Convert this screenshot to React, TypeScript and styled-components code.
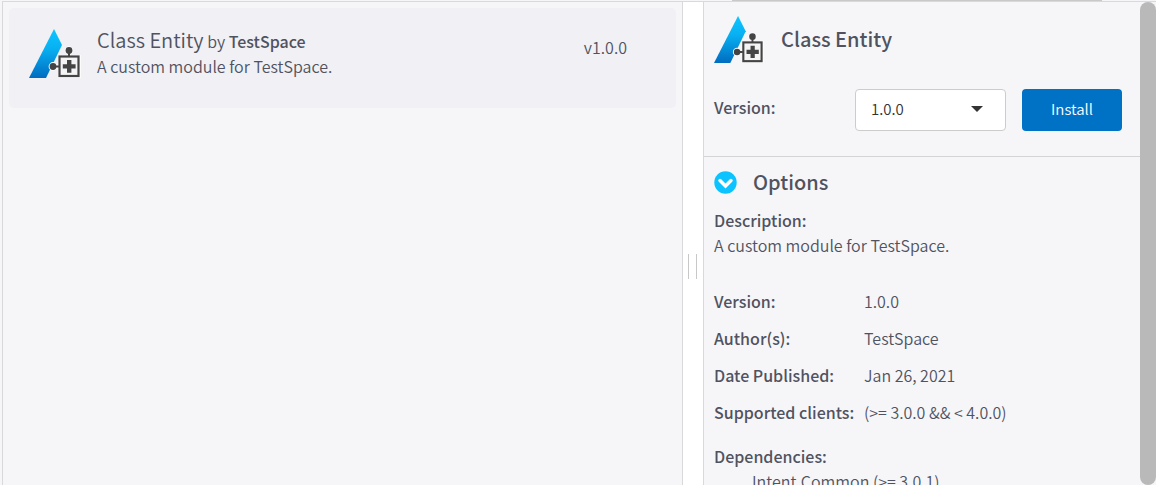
import React, { useState } from 'react';
import styled, { createGlobalStyle } from 'styled-components';

const GlobalStyle = createGlobalStyle`
  *, *::before, *::after { box-sizing: border-box; }
  body {
    margin: 0;
    background: #f6f6f9;
    color: #50535f;
    font-family: "Source Sans Pro", "Noto Sans CJK SC", sans-serif;
    font-size: 16px;
    font-weight: 350;
    line-height: 25px;
  }
  h1, h2, p, dl, dd, ul { margin: 0; padding: 0; font-weight: 350; }
`;

const Page = styled.div`
  display: flex;
  flex-direction: column;
  height: 100vh;
  padding-left: 2px;
  overflow: hidden;
`;

const TopEdge = styled.div`
  flex: none;
  height: 1px;
  margin: 0 54px 0 730px;
  background: #c9c9c9;
`;

const Split = styled.main`
  flex: 1;
  min-height: 0;
  display: grid;
  grid-template-columns: minmax(0, 681fr) 20px minmax(0, 453fr);
  border-top: 1px solid #d9d9dc;
`;

const ListPane = styled.section`
  padding: 6px;
  border: solid #d9d9dc;
  border-width: 0 1px;
`;

const Splitter = styled.div`
  display: flex;
  align-items: center;
  padding: 46px 0 0 5px;
  background: #fff;
`;

const Grip = styled.span`
  width: 9px;
  height: 25px;
  border: solid #c8c8c8;
  border-width: 0 1px;
`;

const Card = styled.article`
  display: flex;
  height: 100px;
  padding: 19px 49px 0 20px;
  border-radius: 5px;
  background: #f0f0f5;
`;

const CardLogo = styled.div`
  padding-top: 1px;
`;

const CardBody = styled.div`
  flex: 1;
  margin-left: 16px;
`;

const CardTitle = styled.h2`
  font-size: 16px;
  line-height: 25px;
`;

const Name = styled.span`
  font-size: 20px;
`;

const Strong = styled.strong`
  font-weight: 500;
`;

const CardVersion = styled.span`
  padding-top: 8px;
`;

const DetailPane = styled.aside`
  display: flex;
  min-height: 0;
  border-left: 1px solid #d9d9dc;
`;

const DetailContent = styled.div`
  flex: 1;
  min-width: 0;
  overflow: hidden;
`;

const ScrollThumb = styled.div`
  flex: none;
  width: 16px;
  border-radius: 8px;
  background: #b9b9b9;
`;

const DetailHeader = styled.header`
  padding: 13px 18px 25px 10px;
  border-bottom: 1px solid #d4d4d8;
`;

const TitleRow = styled.div`
  display: flex;
`;

const Title = styled.h1`
  margin-left: 17px;
  padding-top: 11px;
  font-size: 20px;
  font-weight: 500;
  line-height: 25px;
`;

const InstallRow = styled.div`
  display: flex;
  align-items: center;
  gap: 16px;
  margin-top: 24px;
`;

const VersionLabel = styled.label`
  flex: 1;
  padding-bottom: 5px;
  font-weight: 500;
`;

const SelectWrap = styled.div`
  position: relative;
  width: 151px;
`;

const Select = styled.select`
  appearance: none;
  display: block;
  width: 100%;
  height: 42px;
  padding: 0 15px 4px;
  border: 1px solid #ccc;
  border-radius: 4px;
  background: #fff;
  color: #333;
  font: inherit;
  font-size: 15px;
`;

const Caret = styled.svg`
  position: absolute;
  top: 17px;
  right: 23px;
  pointer-events: none;
`;

const InstallButton = styled.button`
  width: 100px;
  height: 42px;
  padding: 0 0 4px;
  border: 0;
  border-radius: 4px;
  background: #0072c6;
  color: #fff;
  font: inherit;
  font-size: 15px;
`;

const Options = styled.section`
  padding: 12px 10px;
`;

const OptionsToggle = styled.button`
  display: flex;
  align-items: center;
  gap: 16px;
  padding: 0;
  border: 0;
  background: none;
  color: inherit;
  font: inherit;
  font-size: 20px;
  font-weight: 500;
  line-height: 26px;
`;

const Label = styled.dt`
  font-weight: 500;
`;

const Description = styled.dl`
  margin-top: 13px;
`;

const Facts = styled.dl`
  display: grid;
  grid-template-columns: 150px 1fr;
  row-gap: 12px;
  margin-top: 31px;
`;

const Dependencies = styled.dl`
  margin-top: 19px;
`;

const DependencyList = styled.ul`
  padding-left: 38px;
  list-style: none;
`;

function ModuleLogo({ id, size }: { id: string; size: number }) {
  return (
    <svg width={size} height={size} viewBox="0 0 52 52" aria-hidden="true">
      <defs>
        <linearGradient id={id} x1="0" y1="0" x2="0" y2="1">
          <stop offset="0" stopColor="#0cc6ff" />
          <stop offset="0.4" stopColor="#08b0f2" />
          <stop offset="1" stopColor="#006cc0" />
        </linearGradient>
      </defs>
      <path d="M25 1 33 17 17 50H0Z" fill={`url(#${id})`} />
      <g fill="#fbfbfc" stroke="#fbfbfc" strokeWidth="2">
        <rect x="30" y="28" width="21" height="21" />
        <circle cx="40" cy="22.5" r="3.4" />
        <circle cx="24" cy="38.5" r="3.4" />
        <path d="M40 23v7M24 38.5h7" strokeWidth="4" />
      </g>
      <g fill="#444">
        <circle cx="40" cy="22.5" r="3.4" />
        <circle cx="24" cy="38.5" r="3.4" />
        <path d="M39 24h2v5h-2zM25 37.5h5v2h-5z" />
      </g>
      <rect x="30.5" y="28.5" width="19" height="19.5" fill="#f4f4f6" stroke="#444" strokeWidth="2.2" />
      <path d="M38 32h4.4v4.2h4.2v4.4h-4.2v4.2H38v-4.2h-4.2v-4.4H38z" fill="#444" />
    </svg>
  );
}

function ChevronBadge() {
  return (
    <svg width="23" height="23" viewBox="0 0 23 23" aria-hidden="true">
      <circle cx="11.5" cy="11.5" r="11.2" fill="#0dc3ff" />
      <path d="M6 9.5 11.5 15 17 9.5" fill="none" stroke="#fff" strokeWidth="3.4" strokeLinecap="round" />
    </svg>
  );
}

const facts = [
  ['Version:', '1.0.0'],
  ['Author(s):', 'TestSpace'],
  ['Date Published:', 'Jan 26, 2021'],
  ['Supported clients:', '(>= 3.0.0 && < 4.0.0)'],
];

export default function App() {
  const [open, setOpen] = useState(true);
  return (
    <Page>
      <GlobalStyle />
      <TopEdge />
      <Split>
        <ListPane>
          <Card>
            <CardLogo>
              <ModuleLogo id="logo-list" size={52} />
            </CardLogo>
            <CardBody>
              <CardTitle>
                <Name>Class Entity</Name> by <Strong>TestSpace</Strong>
              </CardTitle>
              <p>A custom module for TestSpace.</p>
            </CardBody>
            <CardVersion>v1.0.0</CardVersion>
          </Card>
        </ListPane>
        <Splitter>
          <Grip />
        </Splitter>
        <DetailPane>
          <DetailContent>
            <DetailHeader>
              <TitleRow>
                <ModuleLogo id="logo-detail" size={50} />
                <Title>Class Entity</Title>
              </TitleRow>
              <InstallRow>
                <VersionLabel htmlFor="version">Version:</VersionLabel>
                <SelectWrap>
                  <Select id="version" defaultValue="1.0.0">
                    <option>1.0.0</option>
                  </Select>
                  <Caret width="12" height="6" viewBox="0 0 12 6" aria-hidden="true">
                    <path d="M0 0h12L6 6z" fill="#333" />
                  </Caret>
                </SelectWrap>
                <InstallButton type="button">Install</InstallButton>
              </InstallRow>
            </DetailHeader>
            <Options>
              <OptionsToggle type="button" aria-expanded={open} onClick={() => setOpen(!open)}>
                <ChevronBadge />
                Options
              </OptionsToggle>
              {open && (
                <>
                  <Description>
                    <Label>Description:</Label>
                    <dd>A custom module for TestSpace.</dd>
                  </Description>
                  <Facts>
                    {facts.map(([label, value]) => (
                      <React.Fragment key={label}>
                        <Label>{label}</Label>
                        <dd>{value}</dd>
                      </React.Fragment>
                    ))}
                  </Facts>
                  <Dependencies>
                    <Label>Dependencies:</Label>
                    <dd>
                      <DependencyList>
                        <li>Intent.Common (&gt;= 3.0.1)</li>
                      </DependencyList>
                    </dd>
                  </Dependencies>
                </>
              )}
            </Options>
          </DetailContent>
          <ScrollThumb />
        </DetailPane>
      </Split>
    </Page>
  );
}
